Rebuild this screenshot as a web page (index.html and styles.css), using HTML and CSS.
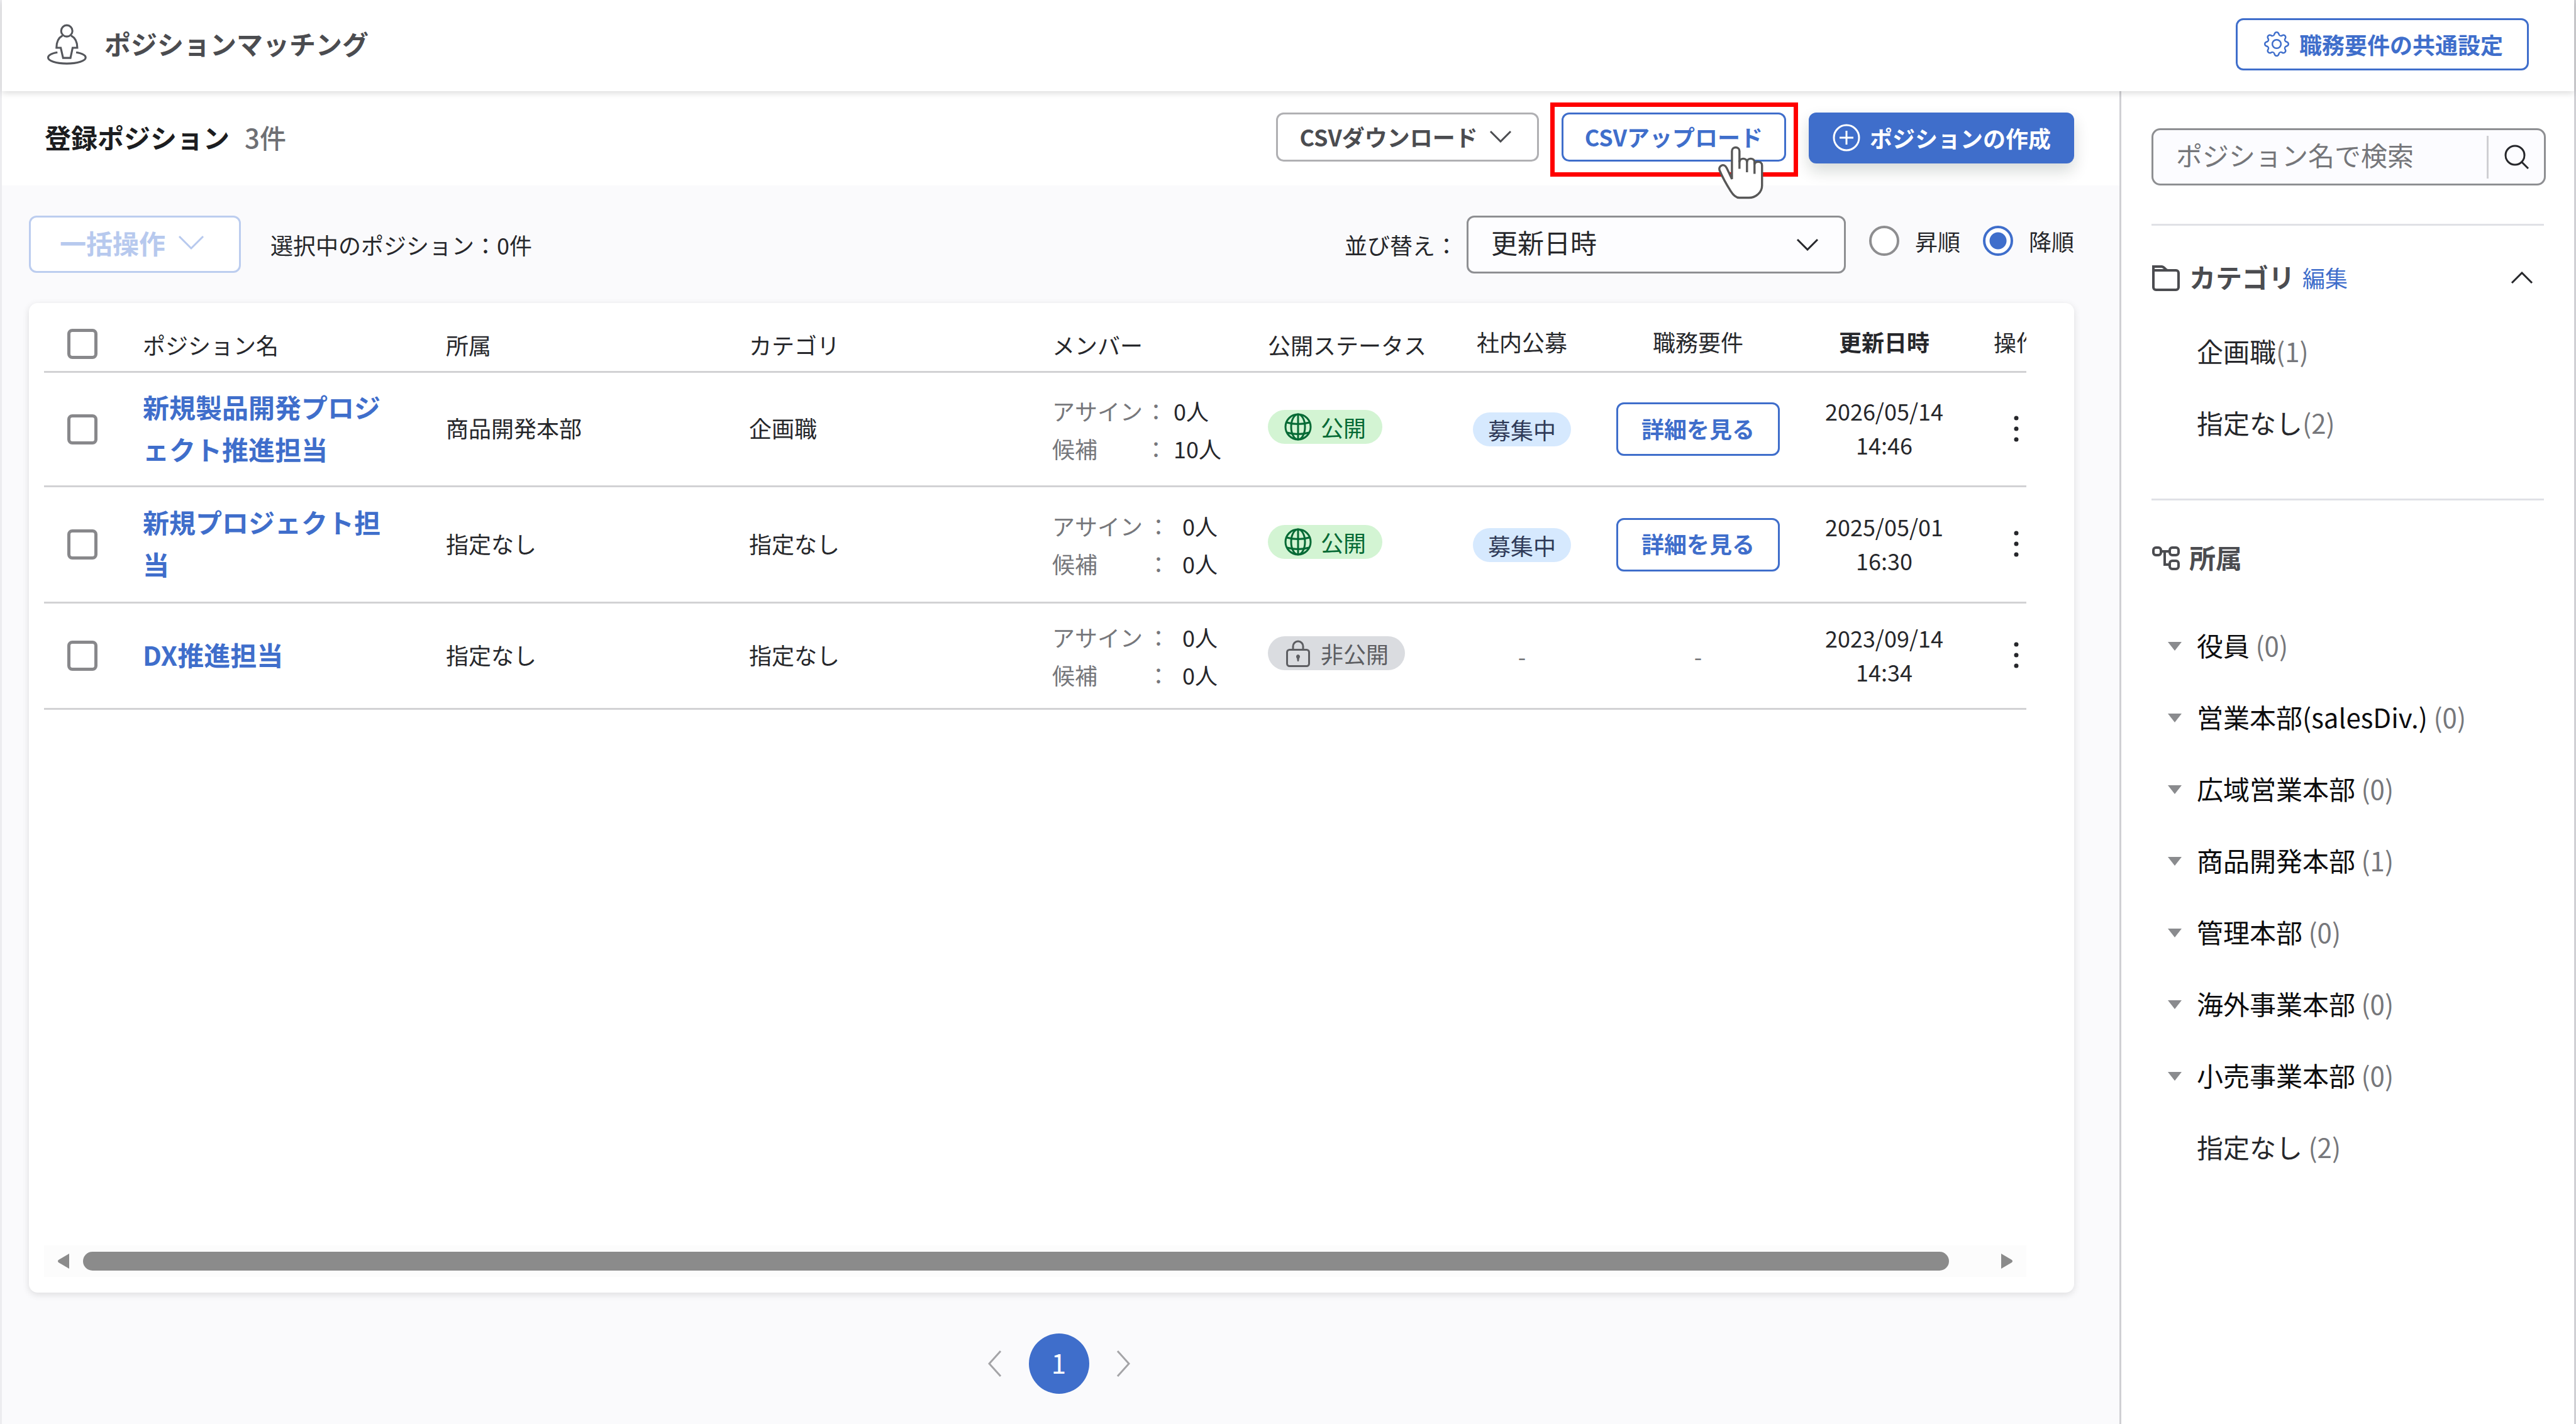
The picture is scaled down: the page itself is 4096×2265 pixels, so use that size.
FILE: index.html
```html
<!DOCTYPE html>
<html lang="ja">
<head>
<meta charset="utf-8">
<title>ポジションマッチング</title>
<link rel="stylesheet" href="styles.css">
</head>
<body>
<div class="app">
  <header class="header">
    <svg class="header-icon" viewBox="118 62 208 210" aria-hidden="true">
      <circle cx="221" cy="98" r="29"/>
      <path d="M199 122C178 133 168 152 168 185H190L202 237H240L251 185H275C275 152 264 133 243 122"/>
      <path d="M173 208C145 213 125 222 125 235C125 252 165 266 221 266C277 266 318 252 318 235C318 222 298 213 269 208"/>
    </svg>
    <h1 class="header-title">ポジションマッチング</h1>
    <button class="btn btn-outline btn-settings" type="button">
      <svg class="gear-icon" viewBox="0 0 16 16" aria-hidden="true"><path d="M8 4.754a3.246 3.246 0 1 0 0 6.492 3.246 3.246 0 0 0 0-6.492zM5.754 8a2.246 2.246 0 1 1 4.492 0 2.246 2.246 0 0 1-4.492 0z"/><path d="M9.796 1.343c-.527-1.79-3.065-1.79-3.592 0l-.094.319a.873.873 0 0 1-1.255.52l-.292-.16c-1.64-.892-3.433.902-2.54 2.541l.159.292a.873.873 0 0 1-.52 1.255l-.319.094c-1.79.527-1.79 3.065 0 3.592l.319.094a.873.873 0 0 1 .52 1.255l-.16.292c-.892 1.64.901 3.434 2.541 2.54l.292-.159a.873.873 0 0 1 1.255.52l.094.319c.527 1.79 3.065 1.79 3.592 0l.094-.319a.873.873 0 0 1 1.255-.52l.292.16c1.64.893 3.434-.902 2.54-2.541l-.159-.292a.873.873 0 0 1 .52-1.255l.319-.094c1.79-.527 1.79-3.065 0-3.592l-.319-.094a.873.873 0 0 1-.52-1.255l.16-.292c.893-1.64-.902-3.433-2.541-2.54l-.292.159a.873.873 0 0 1-1.255-.52l-.094-.319zm-2.633.283c.246-.835 1.428-.835 1.674 0l.094.319a1.873 1.873 0 0 0 2.693 1.115l.291-.16c.764-.415 1.6.42 1.184 1.185l-.159.292a1.873 1.873 0 0 0 1.116 2.692l.318.094c.835.246.835 1.428 0 1.674l-.319.094a1.873 1.873 0 0 0-1.115 2.693l.16.291c.415.764-.42 1.6-1.185 1.184l-.291-.159a1.873 1.873 0 0 0-2.693 1.116l-.094.318c-.246.835-1.428.835-1.674 0l-.094-.319a1.873 1.873 0 0 0-2.692-1.115l-.292.16c-.764.415-1.6-.42-1.184-1.185l.159-.291A1.873 1.873 0 0 0 1.945 8.93l-.319-.094c-.835-.246-.835-1.428 0-1.674l.319-.094A1.873 1.873 0 0 0 3.06 4.377l-.16-.292c-.415-.764.42-1.6 1.185-1.184l.292.159a1.873 1.873 0 0 0 2.692-1.115l.094-.319z"/></svg>
      職務要件の共通設定
    </button>
  </header>

  <div class="body">
    <main class="main">
      <div class="title-bar">
        <h2 class="title">登録ポジション</h2>
        <span class="count">3件</span>
        <div class="title-actions">
          <button class="btn btn-gray btn-download" type="button">CSVダウンロード
            <svg class="chevron" viewBox="0 0 36 20" aria-hidden="true"><path d="M2 2L18 18L34 2"/></svg>
          </button>
          <div class="upload">
            <button class="btn btn-outline btn-upload" type="button">CSVアップロード</button>
            <div class="upload-frame"></div>
            <svg class="cursor" viewBox="876 265 240 277" aria-hidden="true">
              <path class="hand" d="M950 437V292C950 267 989 267 989 292V350C989 325 1028 325 1028 350C1028 325 1067 325 1067 350V362C1067 342 1106 342 1106 366V470C1106 508 1072 534 1038 534H988C970 534 957 521 944 500C925 470 900 425 886 392C878 368 909 353 922 378C932 398 942 420 950 437Z"/>
              <path d="M989 340V384M1028 340V402M1067 350V410"/>
            </svg>
          </div>
          <button class="btn btn-primary" type="button">
            <svg class="plus-icon" viewBox="0 0 46 46" aria-hidden="true"><circle cx="23" cy="23" r="20"/><path d="M23 12V34M12 23H34"/></svg>
            ポジションの作成
          </button>
        </div>
      </div>

      <div class="filter-bar">
        <button class="btn btn-bulk" type="button" disabled>一括操作
          <svg class="chevron chevron-wide" viewBox="0 0 42 24" aria-hidden="true"><path d="M2 2L21 21L40 2"/></svg>
        </button>
        <span class="selected">選択中のポジション：0件</span>
        <div class="sort">
          <label for="sort-key">並び替え：</label>
          <div class="select-wrap">
            <select id="sort-key" class="select"><option>更新日時</option></select>
            <svg class="select-chevron" viewBox="0 0 36 20" aria-hidden="true"><path d="M2 2L18 18L34 2"/></svg>
          </div>
          <div class="radios">
            <label class="radio"><input type="radio" name="order">昇順</label>
            <label class="radio"><input type="radio" name="order" checked>降順</label>
          </div>
        </div>
      </div>

      <section class="card">
        <div class="table-wrap">
          <table class="table">
            <colgroup>
              <col class="c-check"><col class="c-name"><col class="c-dept"><col class="c-cat"><col class="c-member"><col class="c-status"><col class="c-recruit"><col class="c-detail"><col class="c-date"><col class="c-op">
            </colgroup>
            <thead>
              <tr>
                <th class="check"><input type="checkbox" aria-label="すべて選択"></th>
                <th>ポジション名</th>
                <th>所属</th>
                <th>カテゴリ</th>
                <th>メンバー</th>
                <th>公開ステータス</th>
                <th class="mid">社内公募</th>
                <th class="mid">職務要件</th>
                <th class="mid sorted">更新日時</th>
                <th class="mid">操作</th>
              </tr>
            </thead>
            <tbody>
              <tr class="row-1">
                <td class="check"><input type="checkbox" aria-label="選択"></td>
                <td class="name"><a href="#">新規製品開発プロジェクト推進担当</a></td>
                <td>商品開発本部</td>
                <td>企画職</td>
                <td class="member">
                  <dl class="members members-tight">
                    <dt>アサイン</dt><dd class="colon">：</dd><dd>0人</dd>
                    <dt>候補</dt><dd class="colon">：</dd><dd>10人</dd>
                  </dl>
                </td>
                <td class="status"><span class="pill pill-public"><svg class="pill-icon" viewBox="0 0 44 44" aria-hidden="true"><circle cx="22" cy="22" r="20"/><ellipse cx="22" cy="22" rx="11" ry="20"/><path d="M22 2V42M4 15Q22 20 40 15M4 31Q22 36 40 31"/></svg>公開</span></td>
                <td class="mid"><span class="tag">募集中</span></td>
                <td class="mid detail"><button class="btn btn-outline btn-detail" type="button">詳細を見る</button></td>
                <td class="mid date">2026/05/14<br>14:46</td>
                <td class="mid"><button class="more" type="button" aria-label="操作"><svg viewBox="0 0 8 42" aria-hidden="true"><circle cx="4" cy="4" r="3.5"/><circle cx="4" cy="21" r="3.5"/><circle cx="4" cy="38" r="3.5"/></svg></button></td>
              </tr>
              <tr class="row-2">
                <td class="check"><input type="checkbox" aria-label="選択"></td>
                <td class="name"><a href="#">新規プロジェクト担当</a></td>
                <td>指定なし</td>
                <td>指定なし</td>
                <td class="member">
                  <dl class="members">
                    <dt>アサイン</dt><dd class="colon">：</dd><dd>0人</dd>
                    <dt>候補</dt><dd class="colon">：</dd><dd>0人</dd>
                  </dl>
                </td>
                <td class="status"><span class="pill pill-public"><svg class="pill-icon" viewBox="0 0 44 44" aria-hidden="true"><circle cx="22" cy="22" r="20"/><ellipse cx="22" cy="22" rx="11" ry="20"/><path d="M22 2V42M4 15Q22 20 40 15M4 31Q22 36 40 31"/></svg>公開</span></td>
                <td class="mid"><span class="tag">募集中</span></td>
                <td class="mid detail"><button class="btn btn-outline btn-detail" type="button">詳細を見る</button></td>
                <td class="mid date">2025/05/01<br>16:30</td>
                <td class="mid"><button class="more" type="button" aria-label="操作"><svg viewBox="0 0 8 42" aria-hidden="true"><circle cx="4" cy="4" r="3.5"/><circle cx="4" cy="21" r="3.5"/><circle cx="4" cy="38" r="3.5"/></svg></button></td>
              </tr>
              <tr class="row-3">
                <td class="check"><input type="checkbox" aria-label="選択"></td>
                <td class="name"><a href="#">DX推進担当</a></td>
                <td>指定なし</td>
                <td>指定なし</td>
                <td class="member">
                  <dl class="members">
                    <dt>アサイン</dt><dd class="colon">：</dd><dd>0人</dd>
                    <dt>候補</dt><dd class="colon">：</dd><dd>0人</dd>
                  </dl>
                </td>
                <td class="status"><span class="pill pill-private"><svg class="pill-icon" viewBox="0 0 44 44" aria-hidden="true"><rect x="4.5" y="16.5" width="35" height="26" rx="4"/><path d="M14 16V11A8 8 0 0 1 30 11V16"/><path class="solid" d="M22 24a3.5 3.5 0 0 1 2 6l-1 5h-2l-1-5a3.5 3.5 0 0 1 2-6z"/></svg>非公開</span></td>
                <td class="mid none">-</td>
                <td class="mid none">-</td>
                <td class="mid date">2023/09/14<br>14:34</td>
                <td class="mid"><button class="more" type="button" aria-label="操作"><svg viewBox="0 0 8 42" aria-hidden="true"><circle cx="4" cy="4" r="3.5"/><circle cx="4" cy="21" r="3.5"/><circle cx="4" cy="38" r="3.5"/></svg></button></td>
              </tr>
            </tbody>
          </table>
        </div>
        <div class="scrollbar">
          <button class="scroll-arrow" type="button" aria-label="左へ"><svg viewBox="0 0 20 26" aria-hidden="true"><path d="M19 1V25L2 15Q0 13 2 11Z"/></svg></button>
          <div class="scroll-track"><div class="scroll-thumb"></div></div>
          <button class="scroll-arrow" type="button" aria-label="右へ"><svg viewBox="0 0 20 26" aria-hidden="true"><path d="M1 1V25L18 15Q20 13 18 11Z"/></svg></button>
        </div>
      </section>

      <nav class="pager" aria-label="ページ">
        <button class="page-arrow" type="button" aria-label="前へ"><svg viewBox="0 0 22 44" aria-hidden="true"><path d="M20 2L2 22L20 42"/></svg></button>
        <button class="page-current" type="button">1</button>
        <button class="page-arrow" type="button" aria-label="次へ"><svg viewBox="0 0 22 44" aria-hidden="true"><path d="M2 2L20 22L2 42"/></svg></button>
      </nav>
    </main>

    <aside class="sidebar">
      <form class="search">
        <input class="search-input" type="text" placeholder="ポジション名で検索" aria-label="ポジション名で検索">
        <button class="search-btn" type="button" aria-label="検索"><svg viewBox="0 0 40 40" aria-hidden="true"><circle cx="17" cy="17" r="15"/><path d="M27 27L38 38"/></svg></button>
      </form>
      <section class="group group-category">
        <div class="group-head">
          <svg class="group-icon" viewBox="0 0 44 42" aria-hidden="true"><path d="M2 36V3H15C20 3 21 9 25 9H38A4 4 0 0 1 42 13V36A4 4 0 0 1 38 40H6A4 4 0 0 1 2 36ZM2 9H25"/></svg>
          <h3>カテゴリ</h3>
          <a class="edit" href="#">編集</a>
          <button class="collapse" type="button" aria-label="閉じる"><svg viewBox="0 0 36 20" aria-hidden="true"><path d="M2 18L18 2L34 18"/></svg></button>
        </div>
        <ul class="list">
          <li>企画職<span>(1)</span></li>
          <li>指定なし<span>(2)</span></li>
        </ul>
      </section>
      <section class="group group-dept">
        <div class="group-head">
          <svg class="group-icon" viewBox="0 0 44 42" aria-hidden="true"><rect x="2" y="4" width="12" height="12" rx="4"/><rect x="28" y="4" width="14" height="12" rx="4"/><rect x="28" y="25" width="14" height="13" rx="4"/><path d="M14 10H28M20 10V31H28"/></svg>
          <h3>所属</h3>
        </div>
        <ul class="list tree">
          <li class="parent">役員 <span>(0)</span></li>
          <li class="parent">営業本部(salesDiv.) <span>(0)</span></li>
          <li class="parent">広域営業本部 <span>(0)</span></li>
          <li class="parent">商品開発本部 <span>(1)</span></li>
          <li class="parent">管理本部 <span>(0)</span></li>
          <li class="parent">海外事業本部 <span>(0)</span></li>
          <li class="parent">小売事業本部 <span>(0)</span></li>
          <li>指定なし <span>(2)</span></li>
        </ul>
      </section>
    </aside>
  </div>
</div>
</body>
</html>
```
FILE: styles.css
```css
:root {
  --blue: #3f6ecb;
  --text: #26272b;
  --muted: #76777b;
  --line: #d2d2d4;
}

* {
  box-sizing: border-box;
}

body {
  margin: 0;
  background: #fff;
  color: var(--text);
  font-family: "Noto Sans CJK JP", "Noto Sans", sans-serif;
  font-size: 36px;
  line-height: 54px;
}

button,
input,
select {
  font: inherit;
  color: inherit;
  margin: 0;
}

h1,
h2,
h3,
ul,
dl,
dd {
  margin: 0;
  padding: 0;
}

a {
  color: var(--blue);
  text-decoration: none;
}

svg {
  display: block;
  flex: none;
  fill: none;
  stroke: currentColor;
}

.app {
  display: flex;
  flex-direction: column;
  min-height: 100vh;
  border-left: 3px solid #ececef;
  border-right: 3px solid #d0d0d4;
}

/* Header */
.header {
  position: relative;
  z-index: 1;
  display: flex;
  align-items: center;
  height: 145px;
  padding: 0 72px 4px 71px;
  background: #fff;
  box-shadow: 0 3px 10px rgba(0, 0, 0, 0.14);
}

.header-icon {
  width: 65px;
  height: 65px;
  color: #55575c;
  stroke-width: 10;
}

.header-title {
  margin-left: 27px;
  padding-bottom: 4px;
  color: #4b4c50;
  font-size: 42px;
  font-weight: 700;
}

/* Buttons */
.btn {
  display: flex;
  align-items: center;
  justify-content: center;
  padding: 0;
  border: 3px solid;
  border-radius: 12px;
  background: #fff;
  font-weight: 700;
  white-space: nowrap;
}

.btn-outline {
  border-color: var(--blue);
  color: var(--blue);
}

.btn-gray {
  border-color: #b0b0b3;
  color: #4b4c50;
}

.btn-settings {
  gap: 16px;
  height: 83px;
  margin-left: auto;
  padding: 0 38px 2px 42px;
}

.gear-icon {
  width: 40px;
  height: 40px;
  fill: currentColor;
  stroke: none;
}

.btn-primary {
  gap: 14px;
  height: 81px;
  padding: 0 34px 2px;
  border-color: var(--blue);
  background: var(--blue);
  color: #fff;
  box-shadow: 0 12px 24px rgba(0, 30, 20, 0.16);
}

.plus-icon {
  width: 46px;
  height: 46px;
  stroke-width: 3;
}

.chevron {
  width: 36px;
  height: 20px;
  stroke-width: 3;
}

.chevron-wide {
  width: 42px;
  height: 24px;
}

/* Layout */
.body {
  display: flex;
  flex: 1;
}

.main {
  display: flex;
  flex: 1;
  flex-direction: column;
  min-width: 0;
  background: #fafafc;
}

.title-bar {
  display: flex;
  align-items: flex-start;
  height: 150px;
  padding: 34px 72px 0 68px;
  background: #fff;
}

.title,
.count {
  font-size: 42px;
  line-height: 78px;
}

.title {
  color: #1c1d20;
  font-weight: 700;
}

.count {
  margin-left: 24px;
  color: #6e6f74;
  font-weight: 500;
}

.title-actions {
  display: flex;
  gap: 36px;
  margin-left: auto;
}

.btn-download,
.btn-upload {
  height: 78px;
}

.btn-download {
  gap: 18px;
  padding: 0 40px 2px 34px;
}

.btn-upload {
  padding: 0 34px 2px;
}

.upload {
  position: relative;
}

.upload-frame {
  position: absolute;
  inset: -16px -19px -21px -18px;
  border: 7px solid #f00;
  pointer-events: none;
}

.cursor {
  position: absolute;
  top: 53px;
  right: 35px;
  z-index: 2;
  width: 74px;
  height: 85px;
  color: #575757;
  stroke-width: 11;
}

.cursor .hand {
  fill: #fff;
}

/* Filter bar */
.filter-bar {
  display: flex;
  align-items: center;
  height: 187px;
  padding: 0 72px 0 43px;
}

.btn-bulk {
  gap: 20px;
  height: 91px;
  padding: 0 55px 6px 46px;
  border-color: #bccdef;
  color: #b7c9ee;
  font-size: 42px;
}

.selected {
  margin-left: 47px;
}

.sort {
  display: flex;
  align-items: center;
  margin-left: auto;
}

.select-wrap {
  position: relative;
  margin-left: 14px;
}

.select {
  width: 603px;
  height: 92px;
  padding: 0 120px 8px 36px;
  border: 3px solid #8e8f92;
  border-radius: 12px;
  background: #fdfdff;
  font-size: 42px;
  appearance: none;
}

.select-chevron {
  position: absolute;
  top: 36px;
  right: 43px;
  width: 36px;
  height: 20px;
  stroke-width: 3;
  pointer-events: none;
}

.radios {
  display: flex;
  gap: 36px;
  margin-left: 37px;
  padding-bottom: 12px;
}

.radio {
  display: flex;
  align-items: center;
  gap: 25px;
}

.radio input {
  width: 48px;
  height: 48px;
  border: 4px solid #8e8e90;
  border-radius: 50%;
  background: #fff;
  appearance: none;
}

.radio input:checked {
  border-color: var(--blue);
  background: radial-gradient(circle, var(--blue) 13px, #fff 14px);
}

/* Table card */
.card {
  display: flex;
  flex: 1;
  flex-direction: column;
  margin: 0 72px 0 43px;
  padding: 0 76px 25px 24px;
  border-radius: 14px;
  background: #fff;
  box-shadow: 0 3px 12px rgba(0, 0, 0, 0.12);
}

.table-wrap {
  flex: 1;
  overflow: hidden;
}

.table {
  width: 102%;
  table-layout: fixed;
  border-collapse: separate;
  border-spacing: 0;
}

.c-check { width: 157px; }
.c-name { width: 482px; }
.c-dept { width: 482px; }
.c-cat { width: 482px; }
.c-member { width: 343px; }
.c-status { width: 289px; }
.c-recruit { width: 230px; }
.c-detail { width: 330px; }
.c-date { width: 262px; }
.c-op { width: 158px; }

.table th,
.table td {
  padding: 0;
  border-bottom: 3px solid var(--line);
  text-align: left;
  vertical-align: middle;
}

.table td {
  padding-bottom: 5px;
}

.table th {
  height: 111px;
  padding-top: 24px;
  font-weight: 400;
}

.table .mid {
  text-align: center;
}

.table th.mid {
  padding-top: 14px;
}

.table th.sorted {
  font-weight: 700;
}

.table .check {
  padding-bottom: 0;
  padding-left: 37px;
}

.table th.check {
  padding-top: 22px;
}

.table .detail,
.table .none {
  padding-bottom: 0;
}

.check input {
  display: block;
  width: 48px;
  height: 48px;
  border: 5px solid #88888b;
  border-radius: 8px;
  background: #fff;
  appearance: none;
}

.row-1 { height: 182px; }
.row-2 { height: 185px; }
.row-3 { height: 169px; }

.table .name {
  padding-right: 80px;
  padding-bottom: 6px;
  font-size: 42px;
  font-weight: 700;
  line-height: 67px;
}

.table .member {
  padding-bottom: 0;
}

.members {
  display: grid;
  grid-template-columns: 151px 36px auto;
  line-height: 60px;
}

.members dt,
.members .colon {
  color: var(--muted);
}

.members dd:not(.colon) {
  padding-left: 20px;
}

.members-tight {
  grid-template-columns: 147px 36px auto;
}

.members-tight dd:not(.colon) {
  padding-left: 10px;
}

.table .status {
  padding-bottom: 14px;
}

.pill {
  display: inline-flex;
  align-items: center;
  gap: 14px;
  height: 54px;
  padding: 0 26px;
  border-radius: 27px;
  vertical-align: middle;
}

.pill-icon {
  width: 44px;
  height: 44px;
  stroke-width: 3;
}

.pill-icon .solid {
  fill: currentColor;
  stroke: none;
}

.pill-public {
  background: #d3f4d3;
  color: #066a35;
}

.pill-private {
  background: #dadce0;
  color: #5d5e62;
}

.tag {
  display: inline-block;
  padding: 0 24px;
  border-radius: 27px;
  background: #d6e9fe;
  color: #2f3a58;
  vertical-align: middle;
}

.btn-detail {
  width: 260px;
  height: 85px;
  margin: 0 auto;
  padding-bottom: 4px;
}

.none {
  color: var(--muted);
}

.more {
  width: 60px;
  height: 60px;
  padding: 0;
  border: 0;
  background: none;
  vertical-align: middle;
}

.more svg {
  width: 8px;
  height: 42px;
  margin: 0 auto;
  fill: currentColor;
  stroke: none;
}

/* Horizontal scroll bar */
.scrollbar {
  display: flex;
  align-items: center;
  height: 50px;
  background: #fcfcfc;
}

.scroll-arrow {
  width: 62px;
  height: 50px;
  padding: 0;
  border: 0;
  background: none;
  color: #8b8b8b;
}

.scroll-arrow svg {
  width: 20px;
  height: 26px;
  margin: 0 auto;
  fill: currentColor;
  stroke: none;
}

.scroll-track {
  flex: 1;
}

.scroll-thumb {
  width: 98%;
  height: 30px;
  border-radius: 15px;
  background: #8b8b8b;
}

/* Pager */
.pager {
  display: flex;
  align-items: center;
  justify-content: center;
  gap: 43px;
  height: 209px;
  padding: 16px 6px 0 0;
}

.page-arrow {
  padding: 0;
  border: 0;
  background: none;
  color: #a4a4a7;
}

.page-arrow svg {
  width: 22px;
  height: 44px;
  stroke-width: 3;
}

.page-current {
  width: 96px;
  height: 96px;
  padding: 0 0 4px;
  border: 0;
  border-radius: 50%;
  background: var(--blue);
  color: #fff;
  font-size: 42px;
}

/* Sidebar */
.sidebar {
  flex: none;
  width: 723px;
  padding: 59px 45px 0 48px;
  border-left: 3px solid #d0d0d4;
  background: #fff;
}

.search {
  display: flex;
  align-items: center;
  height: 91px;
  border: 3px solid #8e8f92;
  border-radius: 14px;
  background: #fcfcff;
}

.search-input {
  flex: 1;
  min-width: 0;
  height: 70px;
  padding: 0 0 8px 36px;
  border: 0;
  background: none;
  font-size: 42px;
}

.search-input::placeholder {
  color: #75767a;
  opacity: 1;
}

.search-btn {
  width: 91px;
  height: 68px;
  padding: 0 0 0 25px;
  border: 0;
  border-left: 3px solid #cfcfd3;
  background: none;
}

.search-btn svg {
  width: 40px;
  height: 40px;
  stroke-width: 3;
}

.group {
  margin-right: 3px;
  border-top: 3px solid #e0e1e6;
}

.group-category {
  margin-top: 61px;
  padding: 53px 0 64px;
}

.group-dept {
  padding-top: 62px;
}

.group-head {
  display: flex;
  align-items: center;
  height: 60px;
}

.group-icon {
  width: 44px;
  height: 42px;
  margin-left: 1px;
  color: #4b4c50;
  stroke-width: 4;
}

.group-head h3 {
  margin-left: 15px;
  padding-bottom: 4px;
  color: #4b4c50;
  font-size: 42px;
  font-weight: 700;
}

.edit {
  margin-left: 12px;
  padding-bottom: 2px;
}

.collapse {
  margin-left: auto;
  padding: 0;
  border: 0;
  background: none;
}

.collapse svg {
  width: 36px;
  height: 20px;
  margin-right: 17px;
  stroke-width: 3;
}

.list {
  padding: 29px 0 0 72px;
  font-size: 42px;
  line-height: 114px;
  list-style: none;
}

.list span {
  color: var(--muted);
}

.tree {
  padding-top: 51px;
}

.parent {
  position: relative;
  color: #0c0c0e;
}

.parent::before {
  position: absolute;
  top: 52px;
  left: -46px;
  border: 11px solid transparent;
  border-top: 14px solid #8a8b8e;
  border-bottom: 0;
  content: "";
}
```
